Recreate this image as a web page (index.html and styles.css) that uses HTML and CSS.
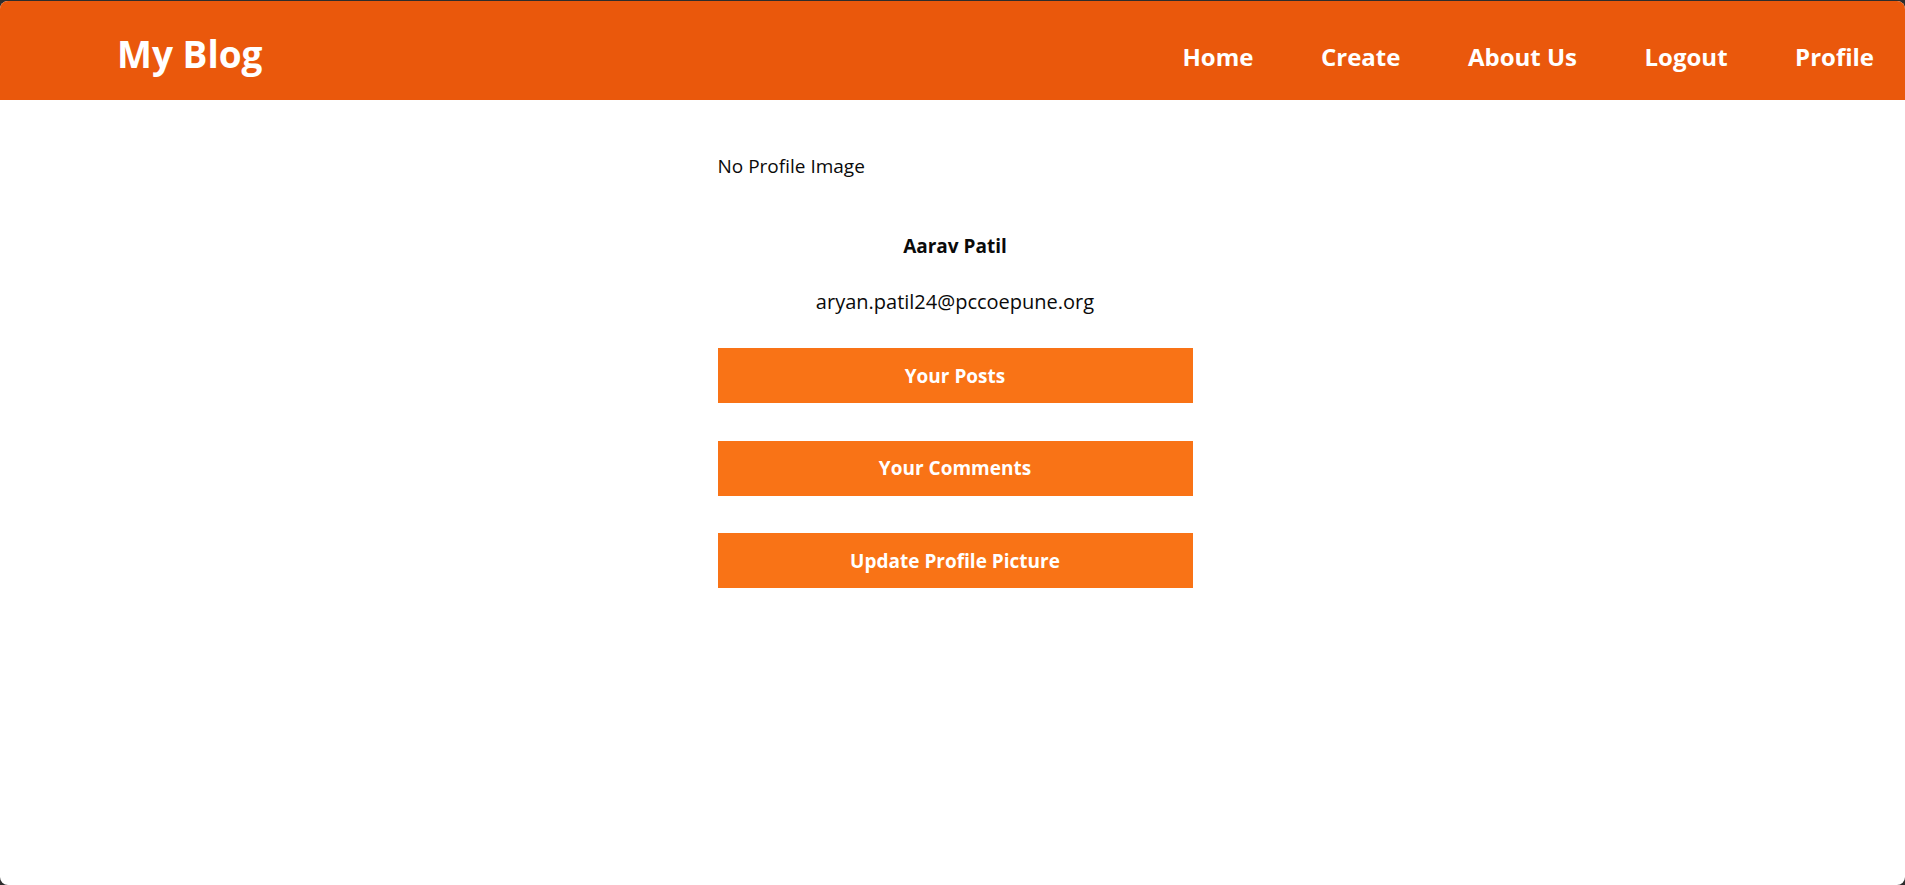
FILE: index.html
```html
<!DOCTYPE html>
<html lang="en">
<head>
<meta charset="utf-8">
<title>My Blog - Profile</title>
<link rel="stylesheet" href="styles.css">
</head>
<body>
<div class="app">
  <header class="topbar">
    <a class="brand" href="#">My Blog</a>
    <nav class="nav">
      <a href="#">Home</a>
      <a href="#">Create</a>
      <a href="#">About Us</a>
      <a href="#">Logout</a>
      <a href="#">Profile</a>
    </nav>
  </header>
  <main class="profile">
    <p class="no-image">No Profile Image</p>
    <h2 class="name">Aarav Patil</h2>
    <p class="email">aryan.patil24@pccoepune.org</p>
    <div class="actions">
      <button class="btn">Your Posts</button>
      <button class="btn">Your Comments</button>
      <button class="btn">Update Profile Picture</button>
    </div>
  </main>
</div>
</body>
</html>
```

FILE: styles.css
```css
html {
  background: #2d2d2d;
}
body {
  margin: 0;
  padding-top: 1px;
  font-family: "Open Sans", "Noto Sans", sans-serif;
  color: #0a0a0a;
}
.app {
  min-height: calc(100vh - 1px);
  background: #fff;
  border-radius: 8px;
  overflow: hidden;
}
.topbar {
  height: 99px;
  background: #ea580c;
  display: flex;
  align-items: center;
  justify-content: space-between;
  padding: 0 31px 0 117px;
}
.brand {
  color: #fff;
  text-decoration: none;
  font-weight: 700;
  font-size: 37px;
  line-height: 44px;
  margin-top: 6px;
}
.nav {
  display: flex;
  gap: 67.5px;
  padding-top: 13px;
}
.nav a {
  color: #fff;
  text-decoration: none;
  font-weight: 700;
  font-size: 24px;
  line-height: 30px;
}
.profile {
  width: 475px;
  margin-left: calc(50% - 235px);
  padding-top: 52px;
}
.no-image {
  margin: 0;
  font-size: 19px;
  line-height: 28px;
}
.name {
  margin: 52px 0 0;
  text-align: center;
  font-size: 19px;
  line-height: 28px;
  font-weight: 700;
}
.email {
  margin: 28px 0 0;
  text-align: center;
  font-size: 20px;
  line-height: 28px;
}
.actions {
  margin-top: 32px;
  display: flex;
  flex-direction: column;
  gap: 37.5px;
}
.btn {
  height: 55px;
  border: 0;
  background: #f97316;
  color: #fff;
  font-family: inherit;
  font-weight: 700;
  font-size: 19px;
  padding: 0;
}
```
